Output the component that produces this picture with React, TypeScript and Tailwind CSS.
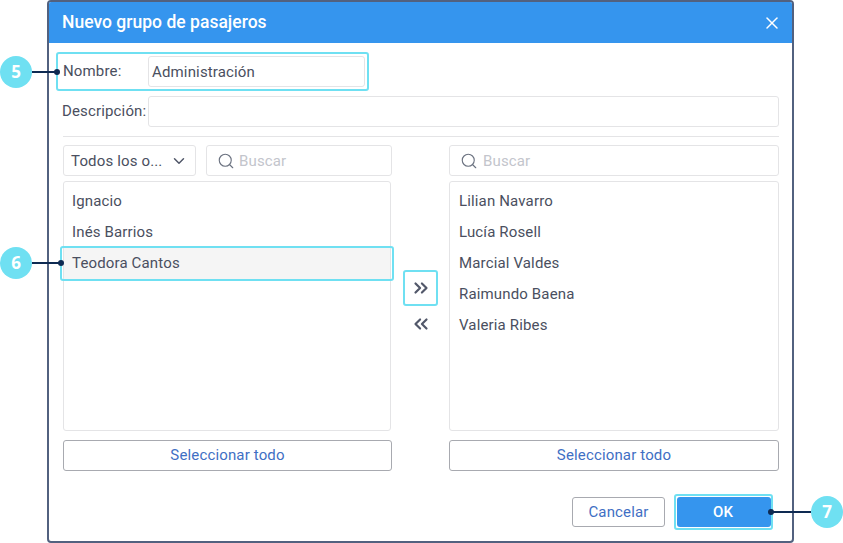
import { Search, X, ChevronDown, ChevronsRight, ChevronsLeft } from "lucide-react";

const left = ["Ignacio", "Inés Barrios", "Teodora Cantos"];
const right = ["Lilian Navarro", "Lucía Rosell", "Marcial Valdes", "Raimundo Baena", "Valeria Ribes"];

function SearchBox({ className, gap }: { className: string; gap: string }) {
  return (
    <div className={`h-[31px] flex items-center pl-[10px] border border-[#e4e4e6] rounded-[3px] ${className}`}>
      <Search size={18} strokeWidth={1.5} className="text-[#6b7280] shrink-0" />
      <span className={`${gap} pt-px text-[#c3c5cc]`}>Buscar</span>
    </div>
  );
}

function SelectAll() {
  return (
    <button className="h-[31px] w-full border border-[#a8aab0] rounded-[3px] text-[#3f6fc4]">
      Seleccionar todo
    </button>
  );
}

function Callout({ n, className }: { n: number; className: string }) {
  return (
    <div className={`absolute w-[32px] h-[32px] rounded-full bg-[#6fe0f2] text-white font-bold text-[17px] tracking-normal font-['Open_Sans',sans-serif] flex items-center justify-center ${className}`}>
      {n}
    </div>
  );
}

export default function App() {
  return (
    <div className="relative w-[843px] h-[543px] bg-white overflow-hidden text-[15px] text-[#4a4f60] font-['Roboto',sans-serif] tracking-[0.15px]">
      <div className="ml-[47px] w-[747px] h-[543px] border-2 border-[#52617f] rounded-[4px] flex flex-col overflow-hidden">
        <div className="h-[41px] shrink-0 bg-[#3595ee] flex items-center justify-between pl-[13px] pr-[10px] text-white">
          <span className="text-[17.5px] font-medium tracking-[0.02px]">Nuevo grupo de pasajeros</span>
          <X size={20} strokeWidth={1.8} />
        </div>
        <div className="flex-1 flex flex-col pl-[14px] pr-[13px] pt-[13px]">
          <div className="flex items-center h-[31px]">
            <span className="w-[85px] shrink-0">Nombre:</span>
            <div className="w-[217px] h-[31px] flex items-center pl-[3px] pt-px border border-[#e4e4e6] rounded-[3px]">Administración</div>
          </div>
          <div className="flex items-center h-[31px] mt-[9px]">
            <span className="w-[85px] shrink-0 whitespace-nowrap -ml-px pr-[1px]">Descripción:</span>
            <div className="flex-1 h-[31px] ml-px border border-[#e4e4e6] rounded-[3px]" />
          </div>
          <div className="h-px bg-[#e4e4e6] mt-[9px]" />
          <div className="flex mt-[8px]">
            <div className="w-[329px] shrink-0 flex flex-col">
              <div className="flex gap-[10px]">
                <div className="w-[133px] h-[31px] flex items-center justify-between pl-[7px] pr-[7px] pt-px border border-[#e4e4e6] rounded-[3px] whitespace-nowrap">
                  <span>Todos los o...</span>
                  <ChevronDown size={18} strokeWidth={2} className="text-[#52586a]" />
                </div>
                <SearchBox className="w-[186px]" gap="ml-[4px]" />
              </div>
              <div className="h-[250px] mt-[5px] mr-px border border-[#e4e4e6] rounded-[3px] pt-[4px]">
                {left.map((l) => (
                  <div key={l} className={`h-[31px] flex items-center pl-[8px] ${l === "Teodora Cantos" ? "bg-[#f5f5f5]" : ""}`}>{l}</div>
                ))}
              </div>
              <div className="mt-[9px]"><SelectAll /></div>
            </div>
            <div className="w-[57px] shrink-0 flex flex-col items-center pt-[125px] text-[#52586a]">
              <div className="h-[35px] flex items-center justify-center"><ChevronsRight size={22} strokeWidth={2.4} /></div>
              <div className="h-[37px] flex items-center justify-center"><ChevronsLeft size={22} strokeWidth={2.4} /></div>
            </div>
            <div className="flex-1 flex flex-col">
              <SearchBox className="w-full" gap="ml-[5px]" />
              <div className="h-[250px] mt-[5px] border border-[#e4e4e6] rounded-[3px] pt-[4px]">
                {right.map((l) => (
                  <div key={l} className="h-[31px] flex items-center pl-[9px]">{l}</div>
                ))}
              </div>
              <div className="mt-[9px]"><SelectAll /></div>
            </div>
          </div>
          <div className="flex justify-end gap-[12px] mt-[26px] pr-[8px]">
            <button className="w-[93px] h-[30px] border border-[#a8aab0] rounded-[3px] text-[#3f6fc4]">Cancelar</button>
            <button className="w-[94px] h-[30px] pr-[2px] bg-[#3595ee] rounded-[3px] text-white font-medium">OK</button>
          </div>
        </div>
      </div>

      {/* annotation overlay */}
      <div className="absolute left-[56px] top-[52px] w-[313px] h-[39px] border-2 border-[#6fe0f2] rounded-[3px]" />
      <div className="absolute left-[60px] top-[246px] w-[334px] h-[35px] border-2 border-[#6fe0f2] rounded-[3px]" />
      <div className="absolute left-[403px] top-[270px] w-[35px] h-[36px] border-2 border-[#6fe0f2] rounded-[3px]" />
      <div className="absolute left-[674px] top-[494px] w-[99px] h-[36px] border-2 border-[#6fe0f2] rounded-[3px]" />

      <Callout n={5} className="left-0 top-[56px]" />
      <div className="absolute left-[32px] top-[71px] w-[25px] h-[2px] bg-[#0e2a52]" />
      <div className="absolute left-[54px] top-[69px] w-[6px] h-[6px] rounded-full bg-[#0e2a52]" />

      <Callout n={6} className="left-0 top-[247px]" />
      <div className="absolute left-[32px] top-[262px] w-[29px] h-[2px] bg-[#0e2a52]" />
      <div className="absolute left-[58px] top-[260px] w-[6px] h-[6px] rounded-full bg-[#0e2a52]" />

      <Callout n={7} className="left-[811px] top-[496px]" />
      <div className="absolute left-[772px] top-[511px] w-[39px] h-[2px] bg-[#0e2a52]" />
      <div className="absolute left-[768px] top-[509px] w-[6px] h-[6px] rounded-full bg-[#0e2a52]" />
    </div>
  );
}
